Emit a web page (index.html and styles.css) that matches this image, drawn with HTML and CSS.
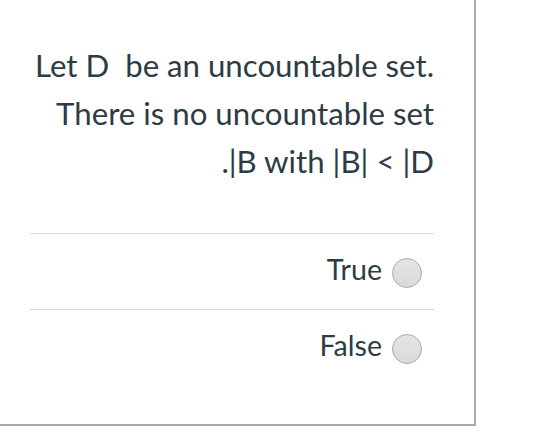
FILE: index.html
```html
<!DOCTYPE html>
<html lang="en">
<head>
<meta charset="utf-8">
<title>Question</title>
<link rel="stylesheet" href="styles.css">
</head>
<body>
<div class="card" dir="rtl">
  <div class="question">Let D&nbsp; be an uncountable set.&lrm;<br>There is no uncountable set<br>B with |B| &lt; |D|.</div>
  <div class="answers">
    <label class="answer">
      <span class="radio"></span>
      <span class="label-text">True</span>
    </label>
    <label class="answer">
      <span class="radio"></span>
      <span class="label-text">False</span>
    </label>
  </div>
</div>
</body>
</html>
```

FILE: styles.css
```css
html, body {
  margin: 0;
  padding: 0;
  background: #ffffff;
}

body {
  font-family: Lato, "Liberation Sans", sans-serif;
  color: #2d3b45;
}

.card {
  box-sizing: border-box;
  width: 476px;
  border-right: 2px solid #aaaaaa;
  border-bottom: 2px solid #aaaaaa;
  padding: 41px 40px 39px 30px;
}

.question {
  font-size: 31.2px;
  line-height: 48px;
  text-align: right;
  white-space: nowrap;
  margin-bottom: 48px;
}

.answers {
  display: flex;
  flex-direction: column;
}

.answer {
  display: flex;
  flex-direction: row;
  align-items: flex-start;
  gap: 10px;
  border-top: 1px solid #dcdcdc;
  padding: 24px 12px 21px 0;
}

.radio {
  width: 30px;
  height: 30px;
  box-sizing: border-box;
  border-radius: 50%;
  border: 1px solid #a9a9a9;
  background: linear-gradient(#e4e4e4, #dadada);
  flex: none;
}

.label-text {
  font-size: 28.6px;
  line-height: 22px;
}
```
